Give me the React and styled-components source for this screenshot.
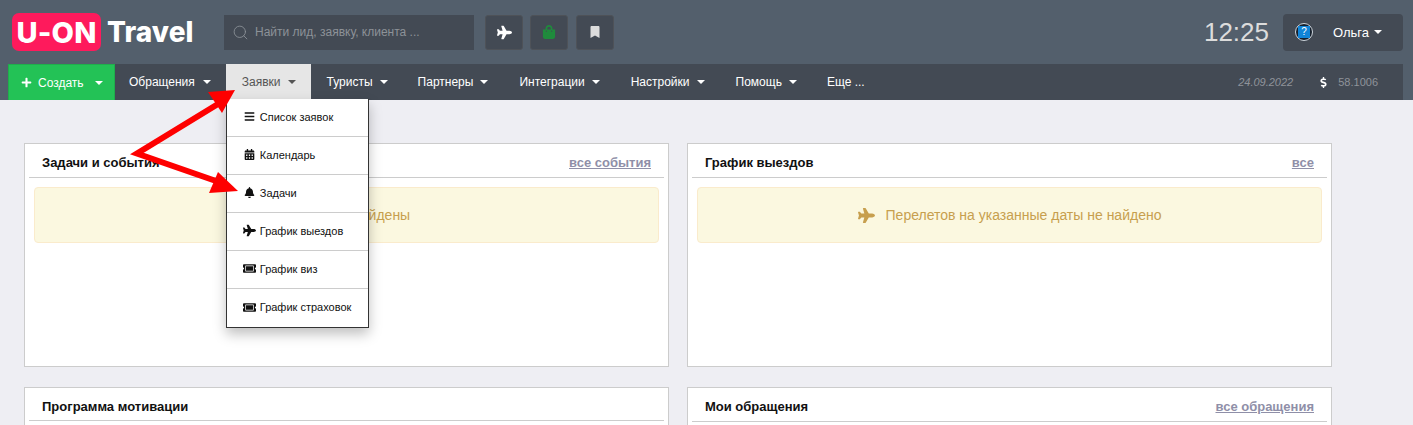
import React from "react";
import styled, { createGlobalStyle } from "styled-components";
import { FaPlane, FaShoppingBag, FaBookmark, FaBars, FaCalendarAlt, FaBell, FaTicketAlt, FaDollarSign, FaPlus } from "react-icons/fa";
import { FiSearch } from "react-icons/fi";

const Global = createGlobalStyle`
  html, body { margin: 0; padding: 0; background: #eeeef3; overflow: hidden; }
  * { box-sizing: border-box; }
  body { font-family: "Liberation Sans", Arial, sans-serif; }
`;
const Page = styled.div`position: relative; width: 1413px; height: 425px; overflow: hidden; background: #eeeef3;`;
const Header = styled.header`background: #535f6c; height: 100px; display: flex; flex-direction: column;`;
const TopBar = styled.div`height: 64px; display: flex; align-items: center; padding: 0 10px 0 12px;`;
const Logo = styled.div`width: 198px; display: flex; align-items: center; gap: 6px; font-family: "Inter", sans-serif; font-weight: 800; color: #fff; margin-right: 14px;`;
const LogoMark = styled.span`width: 89px; height: 38px; border-radius: 7px; background: #fe1a5c; font-size: 29px; letter-spacing: 0.2px; display: flex; align-items: center; justify-content: center;`;
const LogoWord = styled.span`font-size: 28px; letter-spacing: 0.1px;`;
const Search = styled.div`width: 250px; height: 35px; background: #434a54; display: flex; align-items: center; gap: 6px; padding-left: 8px; color: #8d9298; font-size: 12px; margin-right: 11px;`;
const QuickButton = styled.div`width: 38px; height: 35px; margin-right: ${p => p.$gap || 7}px; background: #434a54; border: 1px solid #4e5258; border-radius: 3px; display: flex; align-items: center; justify-content: center; color: ${p => p.$color || "#fff"}; font-size: 15px;`;
const Spacer = styled.div`flex: 1;`;
const Clock = styled.div`font-size: 26px; color: #dcdcdc; margin-right: 14px;`;
const UserBox = styled.div`width: 120px; height: 37px; background: #434a54; border-radius: 4px; display: flex; align-items: center; padding-left: 12px; color: #fff; font-size: 13px;`;
const Avatar = styled.span`width: 18px; height: 18px; border-radius: 50%; background: #16202c; border: 1px solid #cfd6dd; display: flex; align-items: center; justify-content: center; margin-right: 20px;`;
const AvatarSquare = styled.span`width: 12px; height: 12px; background: #1084d8; color: #fff; font-size: 10px; line-height: 12px; text-align: center;`;
const Caret = styled.span`display: inline-block; width: 0; height: 0; border-left: 4px solid transparent; border-right: 4px solid transparent; border-top: 4px solid ${p => p.$color || "#fff"}; margin-left: ${p => p.$gap || 6}px;`;
const Nav = styled.nav`height: 36px; margin: 0 10px 0 8px; background: #434a54; display: flex; align-items: stretch; position: relative;`;
const CreateButton = styled.div`width: 107px; background: #23c256; border: 1px solid #1fae4c; border-bottom: 0; display: flex; align-items: center; padding-left: 12px; color: #fff; font-size: 12px;`;
const PlusIcon = styled(FaPlus)`font-size: 11px; margin-right: 6px;`;
const NavItem = styled.div`position: relative; display: flex; align-items: center; padding: 0 ${p => p.$right}px 0 ${p => p.$left}px; font-size: 12px; color: ${p => p.$active ? "#555" : "#fff"}; background: ${p => p.$active ? "#e6e6e6" : "transparent"};`;
const Stats = styled.div`margin-left: auto; display: flex; align-items: center; font-size: 11px; color: #8f939a; padding-right: 25px;`;
const DateText = styled.span`font-style: italic; margin-right: 25px;`;
const Dollar = styled(FaDollarSign)`color: #fff; font-size: 11px; margin-right: 9px;`;
const Dropdown = styled.ul`position: absolute; top: 35px; left: 0; width: 143px; margin: 0; padding: 0; list-style: none; background: #fff; border: 1px solid #333; border-top: 0; box-shadow: 0 6px 12px rgba(0,0,0,.25); z-index: 5;`;
const DropItem = styled.li`height: 38px; display: flex; align-items: center; padding: 0 0 2px 17px; font-size: 11px; color: #111; border-bottom: 1px solid #ccc; &:last-child { border-bottom: 0; }`;
const DropIcon = styled.span`width: 16px; height: 13px; font-size: ${p => p.$size}px; color: #111; display: flex; align-items: center; margin-left: ${p => p.$size > 11 ? -1 : 0}px; margin-right: ${p => p.$size > 11 ? 1 : 0}px;`;
const Content = styled.main`display: grid; grid-template-columns: 645px 645px; column-gap: 18px; row-gap: 20px; padding: 43px 0 0 24px;`;
const Card = styled.section`height: 224px; background: #fff; border: 1px solid #ccc; padding: 0 4px;`;
const CardHead = styled.div`border-bottom: 1px solid #ccc; display: flex; align-items: flex-start; justify-content: space-between; padding: 11px 13px 6px;`;
const CardTitle = styled.h3`margin: 0; font-size: 13px; font-weight: 700; color: #111;`;
const CardLink = styled.a`font-size: 13px; line-height: 16px; font-weight: 700; color: #8f8fa8; text-decoration: underline;`;
const Alert = styled.div`height: 56px; margin: 9px 5px 0; background: #fbf8e0; border: 1px solid #faebcc; border-radius: 4px; display: flex; align-items: center; justify-content: center; gap: 11px; color: #c79f4e; font-size: 14px;`;
const Arrows = styled.svg`position: absolute; inset: 0; z-index: 10; pointer-events: none;`;

const menu = [
  [FaBars, "Список заявок", 11],
  [FaCalendarAlt, "Календарь", 11],
  [FaBell, "Задачи", 11],
  [FaPlane, "График выездов", 13],
  [FaTicketAlt, "График виз", 13],
  [FaTicketAlt, "График страховок", 13],
];
const navItems = [
  { label: "Обращения", left: 14, right: 15, gap: 8 },
  { label: "Заявки", left: 16, right: 15, gap: 7, active: true },
  { label: "Туристы", left: 16, right: 15, gap: 7 },
  { label: "Партнеры", left: 15, right: 15, gap: 7 },
  { label: "Интеграции", left: 16, right: 15, gap: 7 },
  { label: "Настройки", left: 16, right: 15, gap: 7 },
  { label: "Помощь", left: 16, right: 15, gap: 7 },
];

export default function App() {
  return (
    <Page>
      <Global />
      <Header>
        <TopBar>
          <Logo><LogoMark>U-ON</LogoMark><LogoWord>Travel</LogoWord></Logo>
          <Search><FiSearch size={17} strokeWidth={1.2} /><span>Найти лид, заявку, клиента ...</span></Search>
          <QuickButton><FaPlane /></QuickButton>
          <QuickButton $color="#1f8b3c" $gap={8}><FaShoppingBag size={14} /></QuickButton>
          <QuickButton $color="#dcdcdc"><FaBookmark size={12} /></QuickButton>
          <Spacer />
          <Clock>12:25</Clock>
          <UserBox><Avatar><AvatarSquare>?</AvatarSquare></Avatar>Ольга<Caret $gap={5} /></UserBox>
        </TopBar>
        <Nav>
          <CreateButton><PlusIcon />Создать<Caret $gap={11} /></CreateButton>
          {navItems.map((n) => (
            <NavItem key={n.label} $active={n.active} $left={n.left} $right={n.right}>
              {n.label}<Caret $gap={n.gap} $color={n.active ? "#555" : "#fff"} />
              {n.active && (
                <Dropdown>
                  {menu.map(([I, label, size]) => (
                    <DropItem key={label}><DropIcon $size={size}><I /></DropIcon>{label}</DropItem>
                  ))}
                </Dropdown>
              )}
            </NavItem>
          ))}
          <NavItem $left={15} $right={15}>Еще ...</NavItem>
          <Stats><DateText>24.09.2022</DateText><Dollar />58.1006</Stats>
        </Nav>
      </Header>
      <Content>
        <Card>
          <CardHead><CardTitle>Задачи и события</CardTitle><CardLink>все события</CardLink></CardHead>
          <Alert>Задачи не найдены</Alert>
        </Card>
        <Card>
          <CardHead><CardTitle>График выездов</CardTitle><CardLink>все</CardLink></CardHead>
          <Alert><FaPlane size={17} />Перелетов на указанные даты не найдено</Alert>
        </Card>
        <Card>
          <CardHead><CardTitle>Программа мотивации</CardTitle></CardHead>
        </Card>
        <Card>
          <CardHead><CardTitle>Мои обращения</CardTitle><CardLink>все обращения</CardLink></CardHead>
        </Card>
      </Content>
      <Arrows width="1413" height="425" viewBox="0 0 1413 425">
        <polyline points="218,104 137,153.5 216,181" fill="none" stroke="#fe0000" strokeWidth="6" strokeMiterlimit="6" />
        <g fill="#fe0000">
          <polygon points="235,90 208,92 222,113" />
          <polygon points="238,191 218,172 209,193" />
        </g>
      </Arrows>
    </Page>
  );
}
